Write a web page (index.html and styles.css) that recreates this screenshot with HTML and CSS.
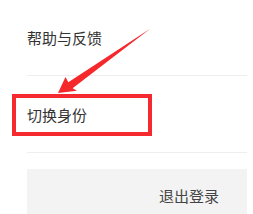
FILE: index.html
```html
<!DOCTYPE html>
<html lang="zh-CN">
<head>
    <meta charset="UTF-8">
    <meta name="viewport" content="width=device-width, initial-scale=1.0">
    <title>设置</title>
    <link rel="stylesheet" href="styles.css">
</head>
<body>
    <div class="menu">
        <div class="menu-item first">帮助与反馈</div>
        <div class="menu-item">切换身份</div>
    </div>
    <div class="logout">退出登录</div>

    <!-- annotation overlay -->
    <div class="highlight"></div>
    <svg class="arrow" width="253" height="214" viewBox="0 0 253 214">
        <polygon points="58,93 65.5,77 68.3,82.2 150.5,28.5 72.6,88.2 77,90.8" fill="#f5282c"/>
    </svg>
</body>
</html>
```

FILE: styles.css
```css
/* General styling */
body {
    margin: 0;
    background-color: #fff;
    font-family: "Noto Sans CJK SC", "Noto Sans", sans-serif;
    color: #333;
    position: relative;
    width: 253px;
    height: 214px;
    overflow: hidden;
}
.menu {
    margin: 0 6px 0 27px;
}
.menu-item {
    display: flex;
    align-items: center;
    height: 76px;
    font-size: 15px;
    border-bottom: 1px solid #eeeeee;
}
.menu-item.first {
    height: 75px;
}
.logout {
    display: flex;
    justify-content: flex-end;
    align-items: center;
    margin: 16px 6px 0 27px;
    padding-right: 28px;
    height: 53px;
    background-color: #f3f3f3;
    font-size: 15px;
    color: #444;
}
.highlight {
    position: absolute;
    left: 12px;
    top: 94px;
    width: 132px; /* 140 - borders */
    height: 34px;
    border: 4px solid #f52a2e;
}
.arrow {
    position: absolute;
    left: 0;
    top: 0;
}
```
